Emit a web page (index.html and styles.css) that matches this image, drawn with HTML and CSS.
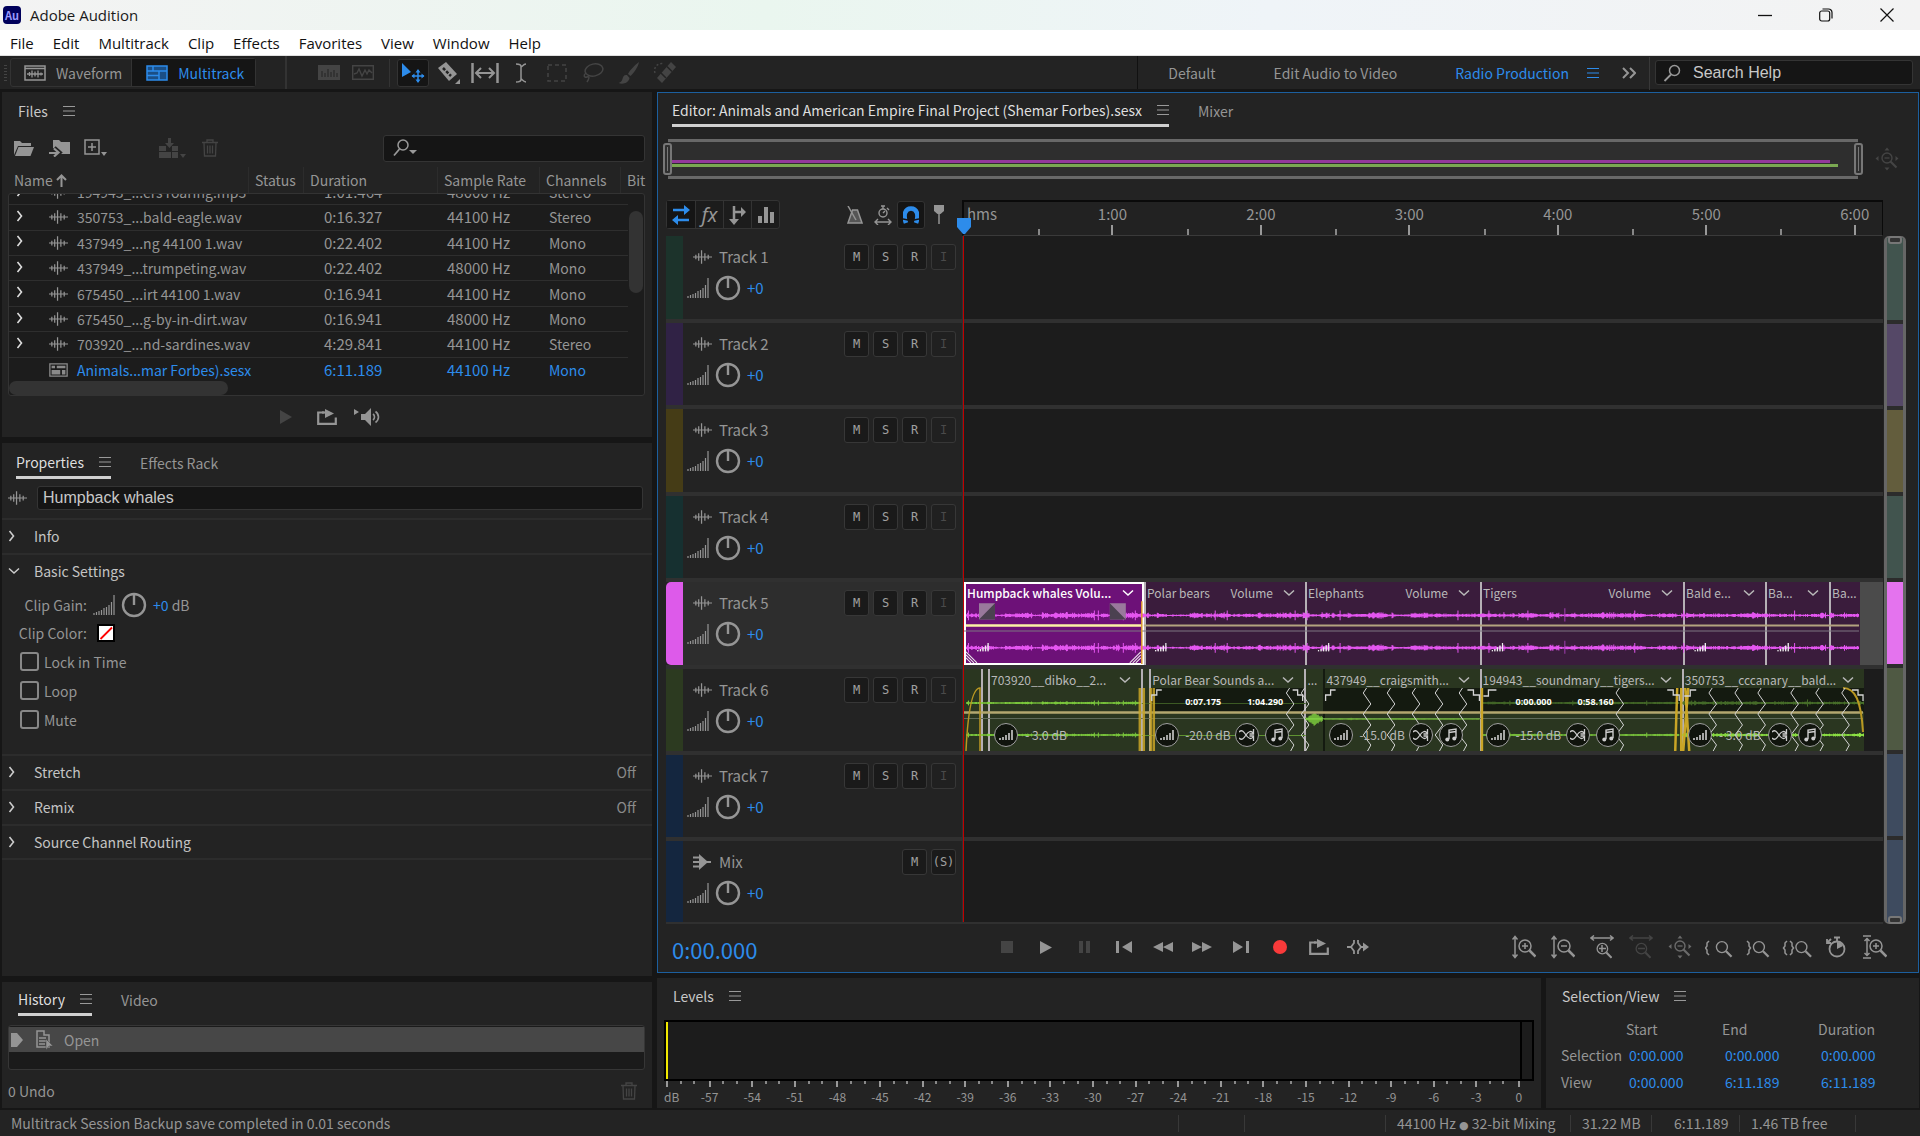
FILE: index.html
```html
<!DOCTYPE html>
<html lang="en">
<head>
<meta charset="utf-8">
<title>Adobe Audition</title>
<link rel="stylesheet" href="styles.css">
</head>
<body>
<svg class="defs" aria-hidden="true">
  <symbol id="wave" viewBox="0 0 20 16"><path d="M0 8H20M3 5.500v5M6 4v8M9 1v14M12.500 4v8M16 5.500v5" fill="none" stroke="currentColor" stroke-width="1.300"/></symbol>
  <symbol id="vol" viewBox="0 0 22 20"><path d="M1 20v-2M3.500 20v-3M6 20v-4M8.500 20v-5M11 20v-7M13.500 20v-8M16 20v-10M18.500 20v-13M21 20V0" stroke="currentColor" stroke-width="1.200"/></symbol>
  <symbol id="knob" viewBox="0 0 26 26"><circle cx="13" cy="13" r="11" fill="none" stroke="currentColor" stroke-width="2.400"/><path d="M13 3v10" stroke="currentColor" stroke-width="2.400"/></symbol>
  <symbol id="menu" viewBox="0 0 12 12"><path d="M0 1.500h12M0 6h12M0 10.500h12" stroke="currentColor" stroke-width="1.200"/></symbol>
  <symbol id="right" viewBox="0 0 8 12"><path d="M1.500 1l4 5-4 5" fill="none" stroke="currentColor" stroke-width="1.600"/></symbol>
  <symbol id="down" viewBox="0 0 12 8"><path d="M1 1.500l5 4.500 5-4.500" fill="none" stroke="currentColor" stroke-width="1.500"/></symbol>
  <symbol id="trash" viewBox="0 0 16 18"><path d="M0 3.500h16M5 3V1h6v2M2 4l.5 13h11L14 4M5.500 6.500v8M8 6.500v8M10.500 6.500v8" fill="none" stroke="currentColor" stroke-width="1.300"/></symbol>
  <symbol id="glass" viewBox="0 0 18 18"><circle cx="11.500" cy="6.500" r="5" fill="none" stroke="currentColor" stroke-width="1.500"/><path d="M8 10.500L1.500 17" stroke="currentColor" stroke-width="1.800"/></symbol>
  <symbol id="session" viewBox="0 0 22 16"><path d="M1 1h20v14H1z" fill="none" stroke="currentColor" stroke-width="1.500"/><path d="M3 3h4v3H3zM9 3h10v3H9zM3 8h10v5H3zM15 8h4v5h-4z" fill="currentColor"/></symbol>
  <symbol id="levels" viewBox="0 0 14 10"><path d="M1 10V8M4 10V7M7 10V5M10 10V3M13 10V0" stroke="currentColor" stroke-width="1.600"/></symbol>
  <symbol id="mag" viewBox="0 0 24 24"><circle cx="13" cy="11" r="6" fill="none" stroke="currentColor" stroke-width="1.500"/><path d="M17.500 15.500l6 6" stroke="currentColor" stroke-width="2.500"/></symbol>
  <symbol id="loop" viewBox="0 0 20 16"><path d="M7 3.500H1.200v11.300h17.600V8.500" fill="none" stroke="currentColor" stroke-width="2.200"/><path d="M5 3.500h5" stroke="currentColor" stroke-width="2.200"/><path d="M8 0l9 4.500L8 9z" fill="currentColor"/></symbol>
  <symbol id="shuffle" viewBox="0 0 16 12"><path d="M0 3c3-3 5 0 7 3s5 5 7 2M0 9c3 3 5 0 7-3s5-5 7-2M14.500 0v5h-4M14.500 12V7h-4" fill="none" stroke="currentColor" stroke-width="1.300"/></symbol>
  <symbol id="note" viewBox="0 0 14 14"><path d="M5 11V2l7-1v9M5 4.500l7-1" fill="none" stroke="currentColor" stroke-width="1.400"/><circle cx="3.300" cy="11.500" r="2" fill="currentColor"/><circle cx="10.300" cy="10.500" r="2" fill="currentColor"/></symbol>
  <symbol id="zig" viewBox="0 0 9 64"><path d="M4 0L.7 5l7.600 11L.7 26l7.600 11L.7 47l7.600 10L5 63" fill="none" stroke="#d5d5d5" stroke-width="1"/></symbol>
  <symbol id="zoomall" viewBox="0 0 24 24"><circle cx="12" cy="11" r="5" fill="none" stroke="currentColor" stroke-width="1.400"/><path d="M15.500 14.500l6 6" stroke="currentColor" stroke-width="2.200"/><path d="M9.500 11h5" stroke="currentColor" stroke-width="1.300"/><path d="M9.500 3.500L12 .5l2.500 3zM9.500 20.500l2.500 3 2.500-3zM3.500 9L.5 11.500l3 2.500zM20.500 9l3 2.500-3 2.500z" fill="currentColor"/></symbol>
</svg>

<header class="titlebar">
  <span class="logo">Au</span><span class="apptitle">Adobe Audition</span>
  <div class="winbtns">
    <button aria-label="Minimize"><svg width="14" height="14"><path d="M0 7.500h14" stroke="#111" stroke-width="1.300"/></svg></button>
    <button aria-label="Restore"><svg width="14" height="14"><rect x=".7" y="3" width="10" height="10" rx="2" fill="none" stroke="#111" stroke-width="1.200"/><path d="M3.500 1h6a3.500 3.500 0 0 1 3.500 3.500v6" fill="none" stroke="#111" stroke-width="1.200"/></svg></button>
    <button aria-label="Close"><svg width="14" height="14"><path d="M.5.500l13 13M13.500.500l-13 13" stroke="#111" stroke-width="1.200"/></svg></button>
  </div>
</header>
<nav class="menubar">
  <button>File</button><button>Edit</button><button>Multitrack</button><button>Clip</button><button>Effects</button><button>Favorites</button><button>View</button><button>Window</button><button>Help</button>
</nav>

<div class="toolbar">
  <span class="grip"></span>
  <div class="modes">
    <button class="mode"><svg width="22" height="16"><path d="M1 1h20v14H1z" fill="none" stroke="currentColor" stroke-width="1.500"/><path d="M1 3.500h20M3 9h16M5.500 7v4M8 5.500v7M11 6.500v5M14 5.500v7M17 7.500v3" fill="none" stroke="currentColor" stroke-width="1.300"/></svg>Waveform</button>
    <button class="mode on"><svg width="22" height="16"><path d="M1 1h20v14H1z" fill="#1b4f86" stroke="currentColor" stroke-width="1.500"/><path d="M1 6h20M7 1v5M1 10.500h12M13 6v9" stroke="currentColor" stroke-width="1.500"/></svg>Multitrack</button>
  </div>
  <div class="displays">
    <button class="ic dim" aria-label="Spectral frequency"><svg width="22" height="15"><path d="M0 0h22v15H0z" fill="currentColor"/><path d="M4 12V6M7 12V8M10 12V4M13 12V7M16 12V5M19 12V8" stroke="#232323"/></svg></button>
    <button class="ic dim" aria-label="Spectral pitch"><svg width="22" height="15"><path d="M.7.700h20.600v13.600H.7zM2 9l3-1 2-4 3 7 3-6 2 4 2-4 3 3" fill="none" stroke="currentColor" stroke-width="1.400"/></svg></button>
  </div>
  <div class="tools">
    <button class="ic sel" aria-label="Move tool"><svg width="24" height="22"><path d="M1 1v14l9-5z" fill="#2d8ceb"/><path d="M17 8v12M11 14h12" stroke="#2d8ceb" stroke-width="1.500"/><path d="M14.500 10.500L17 7l2.500 3.500zM14.500 17.500L17 21l2.500-3.500zM13.500 11.500L10.500 14l3 2.500zM20.500 11.500l3 2.500-3 2.500z" fill="#2d8ceb"/></svg></button>
    <button class="ic" aria-label="Razor tool"><svg width="26" height="24"><path d="M2 7l8-6 11 12-8 7z" fill="currentColor"/><path d="M7 7l8 8" stroke="#232323" stroke-width="2.500" stroke-dasharray="3 1.500"/><path d="M24 18v5h-5z" fill="currentColor"/></svg></button>
    <button class="ic" aria-label="Slip tool"><svg width="28" height="20"><path d="M1.500 0v20M26.500 0v20" stroke="currentColor" stroke-width="2.500"/><path d="M5 10h18M10 5l-5 5 5 5M18 5l5 5-5 5" fill="none" stroke="currentColor" stroke-width="2"/></svg></button>
    <button class="ic" aria-label="Time selection tool"><svg width="12" height="20"><path d="M1 1c3 0 5 .5 5 2.500S8 1 11 1M1 19c3 0 5-.5 5-2.500s2 2.500 5 2.500M6 3.500v13" fill="none" stroke="currentColor" stroke-width="1.500"/></svg></button>
    <button class="ic dim" aria-label="Marquee tool"><svg width="20" height="18"><path d="M1 1h18v16H1z" fill="none" stroke="currentColor" stroke-width="1.500" stroke-dasharray="4 3"/></svg></button>
    <button class="ic dim" aria-label="Lasso tool"><svg width="22" height="20"><ellipse cx="12" cy="7" rx="9" ry="6" fill="none" stroke="currentColor" stroke-width="1.500" transform="rotate(-12 12 7)"/><path d="M4 10c-3 2-2 5 1 4s2 2 0 5" fill="none" stroke="currentColor" stroke-width="1.500"/></svg></button>
    <button class="ic dim" aria-label="Brush tool"><svg width="22" height="22"><path d="M21 0c-4 3-9 8-11 12l2.500 2C16 11 20 5 21 0zM9 13c-3-.5-4 1.500-4.500 4S2 20.500.5 21c4 1.500 10 .5 11-5z" fill="currentColor"/></svg></button>
    <button class="ic dim" aria-label="Spot healing tool"><svg width="24" height="22"><path d="M18 0l5 5-14 16-5-5z" fill="currentColor"/><path d="M14 4.500l5 5M8 11l5 5" stroke="#232323" stroke-width="1.500"/><path d="M2 11a7 7 0 0 1 9-9" fill="none" stroke="currentColor" stroke-width="1.500" stroke-dasharray="2 2"/></svg></button>
  </div>
  <div class="workspaces">
    <button>Default</button><button>Edit Audio to Video</button><button class="blue">Radio Production <svg width="12" height="12"><use href="#menu"/></svg></button>
    <button aria-label="More workspaces"><svg width="14" height="12"><path d="M1 1l5 5-5 5M8 1l5 5-5 5" fill="none" stroke="currentColor" stroke-width="2"/></svg></button>
  </div>
  <label class="help field"><svg width="18" height="18"><use href="#glass"/></svg><input type="text" value="Search Help" aria-label="Search Help"></label>
</div>

<main class="main">
  <div class="left">
    <section class="panel files">
      <div class="tabs"><h2 class="tab">Files <svg width="12" height="12"><use href="#menu"/></svg></h2></div>
      <div class="filetools">
        <button class="ic" aria-label="Open file"><svg width="20" height="16"><path d="M0 15V1h6l2 2h9v3H4z" fill="currentColor"/><path d="M4.500 7H20l-3.500 9H1z" fill="currentColor"/></svg></button>
        <button class="ic" aria-label="Import file"><svg width="22" height="18"><path d="M4 9V1h6l2 2h9v12H10z" fill="currentColor"/><path d="M0 14h8M5 9l5 4.500L5 18" fill="none" stroke="#232323" stroke-width="5"/><path d="M0 14h8M5 9.500l4.500 4L5 17.500" fill="none" stroke="currentColor" stroke-width="2.200"/></svg></button>
        <button class="ic" aria-label="New file"><svg width="24" height="18"><path d="M1 1h14v14H1zM8 4v8M4 8h8" fill="none" stroke="currentColor" stroke-width="1.500"/><path d="M17 13h6l-3 4z" fill="currentColor"/></svg></button>
        <button class="ic dim gap" aria-label="Insert into multitrack"><svg width="27" height="20"><path d="M0 8h7v5H0zM13 8h6v5h-6zM0 14h12v6H0zM13 14h6v6h-6zM9 0h3v5h3l-4.500 5L6 5h3z" fill="currentColor"/><path d="M21 16h6l-3 4z" fill="currentColor"/></svg></button>
        <button class="ic dim" aria-label="Delete"><svg width="16" height="18"><use href="#trash"/></svg></button>
        <label class="field filesearch"><svg width="24" height="18"><circle cx="10" cy="6" r="5" fill="none" stroke="currentColor" stroke-width="1.500"/><path d="M6.500 10L1 16.500" stroke="currentColor" stroke-width="1.800"/><path d="M16 11h8l-4 4z" fill="currentColor"/></svg><input type="text" aria-label="Search files"></label>
      </div>
      <div class="colheads"><span>Name<svg width="11" height="13"><path d="M5.500 13V2M1 6l4.500-4.500L10 6" fill="none" stroke="currentColor" stroke-width="2"/></svg></span><span>Status</span><span>Duration</span><span>Sample Rate</span><span>Channels</span><span>Bit</span></div>
      <div class="filebox">
        <table class="filetable">
          <colgroup><col class="c1"><col class="c2"><col class="c3"><col class="c4"><col class="c5"><col></colgroup>
          <tbody>
          <tr><td><svg width="8" height="12"><use href="#right"/></svg></td><td><svg width="19" height="16"><use href="#wave"/></svg></td><td>194943_...ers roaring.mp3</td><td class="num">1:01.464</td><td class="num">48000 Hz</td><td>Stereo</td></tr>
          <tr><td><svg width="8" height="12"><use href="#right"/></svg></td><td><svg width="19" height="16"><use href="#wave"/></svg></td><td>350753_...bald-eagle.wav</td><td class="num">0:16.327</td><td class="num">44100 Hz</td><td>Stereo</td></tr>
          <tr><td><svg width="8" height="12"><use href="#right"/></svg></td><td><svg width="19" height="16"><use href="#wave"/></svg></td><td>437949_...ng 44100 1.wav</td><td class="num">0:22.402</td><td class="num">44100 Hz</td><td>Mono</td></tr>
          <tr><td><svg width="8" height="12"><use href="#right"/></svg></td><td><svg width="19" height="16"><use href="#wave"/></svg></td><td>437949_...trumpeting.wav</td><td class="num">0:22.402</td><td class="num">48000 Hz</td><td>Mono</td></tr>
          <tr><td><svg width="8" height="12"><use href="#right"/></svg></td><td><svg width="19" height="16"><use href="#wave"/></svg></td><td>675450_...irt 44100 1.wav</td><td class="num">0:16.941</td><td class="num">44100 Hz</td><td>Mono</td></tr>
          <tr><td><svg width="8" height="12"><use href="#right"/></svg></td><td><svg width="19" height="16"><use href="#wave"/></svg></td><td>675450_...g-by-in-dirt.wav</td><td class="num">0:16.941</td><td class="num">48000 Hz</td><td>Mono</td></tr>
          <tr><td><svg width="8" height="12"><use href="#right"/></svg></td><td><svg width="19" height="16"><use href="#wave"/></svg></td><td>703920_...nd-sardines.wav</td><td class="num">4:29.841</td><td class="num">44100 Hz</td><td>Stereo</td></tr>
          <tr class="blue"><td></td><td><svg class="grey" width="19" height="14" viewBox="0 0 22 16" preserveAspectRatio="none"><use href="#session" width="22" height="16"/></svg></td><td>Animals...mar Forbes).sesx</td><td class="num">6:11.189</td><td class="num">44100 Hz</td><td>Mono</td></tr>
          </tbody>
        </table>
        <div class="vthumb"></div>
        <div class="hthumb"></div>
      </div>
      <div class="preview">
        <button class="ic dim" aria-label="Play"><svg width="12" height="14"><path d="M0 0l12 7-12 7z" fill="currentColor"/></svg></button>
        <button class="ic" aria-label="Loop playback"><svg width="20" height="16"><use href="#loop"/></svg></button>
        <button class="ic" aria-label="Auto-play"><svg width="28" height="18"><path d="M0 1l5 3-5 3zM7 6h4l6-6v18l-6-6H7z" fill="currentColor"/><path d="M19 6c2 1.500 2 4.500 0 6M21.500 3.500c4 3 4 8 0 11" fill="none" stroke="currentColor" stroke-width="1.600"/></svg></button>
      </div>
    </section>

    <section class="panel props">
      <div class="tabs"><h2 class="tab active">Properties <svg width="12" height="12"><use href="#menu"/></svg></h2><button class="tab off">Effects Rack</button></div>
      <div class="cliprow"><svg width="19" height="16"><use href="#wave"/></svg><input class="field clipname" type="text" value="Humpback whales" aria-label="Clip name"></div>
      <div class="sec"><button class="sechead"><svg width="8" height="12"><use href="#right"/></svg>Info</button></div>
      <div class="sec open"><button class="sechead"><svg width="12" height="8"><use href="#down"/></svg>Basic Settings</button>
        <div class="gain"><span class="lab">Clip Gain:</span><svg width="22" height="22"><use href="#vol"/></svg><svg width="26" height="26"><use href="#knob"/></svg><span><span class="blue">+0</span> dB</span></div>
        <div class="gain color"><span class="lab">Clip Color:</span><button class="swatch" aria-label="Clip color"><svg width="14" height="14"><path d="M1.500 13L13 1.500" stroke="#f00" stroke-width="1.800"/></svg></button></div>
        <label class="check"><input type="checkbox">Lock in Time</label>
        <label class="check"><input type="checkbox">Loop</label>
        <label class="check"><input type="checkbox">Mute</label>
      </div>
      <div class="sec"><button class="sechead"><svg width="8" height="12"><use href="#right"/></svg>Stretch<span>Off</span></button></div>
      <div class="sec"><button class="sechead"><svg width="8" height="12"><use href="#right"/></svg>Remix<span>Off</span></button></div>
      <div class="sec last"><button class="sechead"><svg width="8" height="12"><use href="#right"/></svg>Source Channel Routing</button></div>
    </section>

    <section class="panel history">
      <div class="tabs"><h2 class="tab active">History <svg width="12" height="12"><use href="#menu"/></svg></h2><button class="tab off">Video</button></div>
      <div class="histbox"><div class="histrow"><svg width="12" height="14"><path d="M0 0h6l6 7-6 7H0z" fill="currentColor"/></svg><svg width="18" height="20"><path d="M1 1h7v4h5v12H1zM3 8h7M3 11h7M3 14h6" fill="none" stroke="currentColor" stroke-width="1.500"/><path d="M10 9l7 7h-4l-3 4z" fill="currentColor" stroke="#474747" stroke-width=".5"/></svg>Open</div></div>
      <div class="undo">0 Undo<button class="ic dim" aria-label="Delete history"><svg width="16" height="18"><use href="#trash"/></svg></button></div>
    </section>
  </div>

  <div class="rightcol">
    <section class="panel editor">
      <div class="tabs"><h2 class="tab active">Editor: Animals and American Empire Final Project (Shemar Forbes).sesx <svg width="12" height="12"><use href="#menu"/></svg></h2><button class="tab off">Mixer</button></div>
      <div class="overview">
        <div class="navigator"><i class="handle"></i><div class="navtracks"><i class="np"></i><i class="ng"></i></div><i class="handle"></i></div>
        <button class="ic dim" aria-label="Zoom out full"><svg width="24" height="24"><use href="#zoomall"/></svg></button>
      </div>
      <div class="timehead">
        <div class="edtools">
          <div class="toggles">
            <button class="blue" aria-label="Inputs and outputs"><svg width="20" height="20"><path d="M2 5h11M18 15H7" stroke="currentColor" stroke-width="2.500"/><path d="M13 0l6 5-6 5zM7 10l-6 5 6 5z" fill="currentColor"/></svg></button>
            <button aria-label="Effects" class="fx">fx</button>
            <button aria-label="Sends"><svg width="18" height="20"><path d="M5 1v15M5 7h10" stroke="currentColor" stroke-width="2.500"/><path d="M0 14h10l-5 6zM12 2l5 5-5 5z" fill="currentColor"/></svg></button>
            <button aria-label="EQ"><svg width="16" height="16"><path d="M2 16V9M8 16V0M14 16V5" stroke="currentColor" stroke-width="4"/></svg></button>
          </div>
          <div class="snaps">
            <button class="ic" aria-label="Metronome"><svg width="16" height="18"><path d="M1 17L5.500 4h5L15 17z" fill="#555" stroke="currentColor" stroke-width="1.500"/><path d="M1 0l8 14" stroke="currentColor" stroke-width="1.500"/></svg></button>
            <button class="ic" aria-label="Stretch"><svg width="18" height="20"><circle cx="9" cy="8" r="4" fill="none" stroke="currentColor" stroke-width="1.400"/><path d="M9 8l2-2M9 4V1M7 1h4M1 17h16M4 14l-3 3 3 3M14 14l3 3-3 3M13 3l2 2" fill="none" stroke="currentColor" stroke-width="1.400"/></svg></button>
            <button class="ic sel blue" aria-label="Snap"><svg width="16" height="18"><path d="M3 17C0 9 2 2.500 8 2.500S16 9 13 17" fill="none" stroke="currentColor" stroke-width="4.500"/><path d="M0 13l5 1M16 13l-5 1" stroke="#151515" stroke-width="1.300"/></svg></button>
            <button class="ic" aria-label="Add marker"><svg width="10" height="20"><path d="M0 0h10v6L6.500 9h-3L0 6z" fill="currentColor"/><path d="M5 5v14" stroke="currentColor" stroke-width="1.500"/></svg></button>
          </div>
        </div>
        <div class="ruler"><span class="half">hms</span><span>1:00</span><span>2:00</span><span>3:00</span><span>4:00</span><span>5:00</span><span>6:00</span></div>
      </div>
      <div class="trackarea">
        <div class="tracks">
          <svg class="playhead" width="14" height="16"><path d="M0 0h14v9l-6 7H6L0 9z" fill="#2d8ceb"/></svg>
          <div class="track t1"><div class="thead"><svg width="19" height="16"><use href="#wave"/></svg><b>Track 1</b><span class="msr"><button>M</button><button>S</button><button>R</button><button class="dimi">I</button></span><div class="vol"><svg width="22" height="20"><use href="#vol"/></svg><svg width="26" height="26"><use href="#knob"/></svg><span class="blue">+0</span></div></div><div class="lane"></div></div>
          <div class="track t2"><div class="thead"><svg width="19" height="16"><use href="#wave"/></svg><b>Track 2</b><span class="msr"><button>M</button><button>S</button><button>R</button><button class="dimi">I</button></span><div class="vol"><svg width="22" height="20"><use href="#vol"/></svg><svg width="26" height="26"><use href="#knob"/></svg><span class="blue">+0</span></div></div><div class="lane"></div></div>
          <div class="track t3"><div class="thead"><svg width="19" height="16"><use href="#wave"/></svg><b>Track 3</b><span class="msr"><button>M</button><button>S</button><button>R</button><button class="dimi">I</button></span><div class="vol"><svg width="22" height="20"><use href="#vol"/></svg><svg width="26" height="26"><use href="#knob"/></svg><span class="blue">+0</span></div></div><div class="lane"></div></div>
          <div class="track t4"><div class="thead"><svg width="19" height="16"><use href="#wave"/></svg><b>Track 4</b><span class="msr"><button>M</button><button>S</button><button>R</button><button class="dimi">I</button></span><div class="vol"><svg width="22" height="20"><use href="#vol"/></svg><svg width="26" height="26"><use href="#knob"/></svg><span class="blue">+0</span></div></div><div class="lane"></div></div>
          <div class="track t5"><div class="thead"><svg width="19" height="16"><use href="#wave"/></svg><b>Track 5</b><span class="msr"><button>M</button><button>S</button><button>R</button><button class="dimi">I</button></span><div class="vol"><svg width="22" height="20"><use href="#vol"/></svg><svg width="26" height="26"><use href="#knob"/></svg><span class="blue">+0</span></div></div>
            <div class="lane">
              <div class="clip selected" style="flex-grow:180"><div class="cliptop"><span>Humpback whales Volu...</span><svg width="12" height="8"><use href="#down"/></svg></div></div>
              <div class="clip" style="flex-grow:161"><div class="cliptop"><span>Polar bears</span><span class="env">Volume</span><svg width="12" height="8"><use href="#down"/></svg></div></div>
              <div class="clip" style="flex-grow:175"><div class="cliptop"><span>Elephants</span><span class="env">Volume</span><svg width="12" height="8"><use href="#down"/></svg></div></div>
              <div class="clip" style="flex-grow:203"><div class="cliptop"><span>Tigers</span><span class="env">Volume</span><svg width="12" height="8"><use href="#down"/></svg></div></div>
              <div class="clip" style="flex-grow:82"><div class="cliptop"><span>Bald e...</span><svg width="12" height="8"><use href="#down"/></svg></div></div>
              <div class="clip" style="flex-grow:64"><div class="cliptop"><span>Ba...</span><svg width="12" height="8"><use href="#down"/></svg></div></div>
              <div class="clip" style="flex-grow:31"><div class="cliptop"><span>Ba...</span></div></div>
              <div class="rest" style="flex-grow:23"></div>
              <svg class="overlay" viewBox="0 0 920 82" preserveAspectRatio="none">
                <path d="M0 48.500H896" stroke="#7d7480"/>
                <path class="w" data-y="33" data-from="2" data-to="896" data-amp="4" stroke="#e455f0"/>
                <path class="w" data-y="65" data-from="2" data-to="896" data-amp="4" stroke="#e455f0"/>
                <path d="M601.500 26v13M601.500 58v13" stroke="#a03eb0"/>
                <path d="M180 43H896" stroke="#b3a27f" stroke-width="2"/>
                <path d="M2 43H178" stroke="#fbf3a4" stroke-width="2.500"/>
                <path d="M178 19v62" stroke="#e09a2c" stroke-width="1.500"/>
                <path d="M15 21h16v16H15zM146 21h16v16h-16z" fill="#99799c"/>
                <path d="M31 21v16H15zM146 21v16h16z" fill="#4b4150"/>
                <path d="M2 72l8 8M2 75l5 5M2 69l11 11M177 72l-8 8M177 75l-5 5M177 69l-11 11" stroke="#eee" stroke-width="1"/>
                <g color="#eee"><use href="#levels" x="13" y="60" width="12" height="9"/><use href="#levels" x="191" y="60" width="12" height="9"/><use href="#levels" x="354" y="60" width="12" height="9"/><use href="#levels" x="528" y="60" width="12" height="9"/><use href="#levels" x="731" y="60" width="12" height="9"/><use href="#levels" x="814" y="60" width="12" height="9"/></g>
              </svg>
            </div></div>
          <div class="track t6"><div class="thead"><svg width="19" height="16"><use href="#wave"/></svg><b>Track 6</b><span class="msr"><button>M</button><button>S</button><button>R</button><button class="dimi">I</button></span><div class="vol"><svg width="22" height="20"><use href="#vol"/></svg><svg width="26" height="26"><use href="#knob"/></svg><span class="blue">+0</span></div></div>
            <div class="lane">
              <div class="clip" style="flex-grow:17"></div>
              <div class="clip" style="flex-grow:7"></div>
              <div class="clip" style="flex-grow:153"><div class="cliptop"><span>703920__dibko__2...</span><svg width="12" height="8"><use href="#down"/></svg></div><div class="clipfx"><i class="badge"><svg width="14" height="10"><use href="#levels"/></svg></i><span>- 3.0 dB</span></div></div>
              <div class="clip" style="flex-grow:8"></div>
              <div class="clip stretched" style="flex-grow:155"><div class="cliptop"><span>Polar Bear Sounds a...</span><svg width="12" height="8"><use href="#down"/></svg></div><div class="times"><span>0:07.175</span><span>1:04.290</span></div><div class="clipfx"><i class="badge"><svg width="14" height="10"><use href="#levels"/></svg></i><span>-20.0 dB</span><i class="badge"><svg width="16" height="12"><use href="#shuffle"/></svg></i><i class="badge"><svg width="14" height="14"><use href="#note"/></svg></i></div></div>
              <div class="clip" style="flex-grow:19"><div class="cliptop"><span>...</span></div></div>
              <div class="clip stretched dark" style="flex-grow:156"><div class="cliptop"><span>437949__craigsmith...</span><svg width="12" height="8"><use href="#down"/></svg></div><div class="clipfx"><i class="badge"><svg width="14" height="10"><use href="#levels"/></svg></i><span>-15.0 dB</span><i class="badge"><svg width="16" height="12"><use href="#shuffle"/></svg></i><i class="badge"><svg width="14" height="14"><use href="#note"/></svg></i></div></div>
              <div class="clip stretched" style="flex-grow:202"><div class="cliptop"><span>194943__soundmary__tigers...</span><svg width="12" height="8"><use href="#down"/></svg></div><div class="times"><span>0:00.000</span><span>0:58.160</span></div><div class="clipfx"><i class="badge"><svg width="14" height="10"><use href="#levels"/></svg></i><span>-15.0 dB</span><i class="badge"><svg width="16" height="12"><use href="#shuffle"/></svg></i><i class="badge"><svg width="14" height="14"><use href="#note"/></svg></i></div></div>
              <div class="clip stretched" style="flex-grow:182"><div class="cliptop"><span>350753__cccanary__bald...</span><svg width="12" height="8"><use href="#down"/></svg></div><div class="clipfx"><i class="badge"><svg width="14" height="10"><use href="#levels"/></svg></i><span>- 3.0 dB</span><i class="badge"><svg width="16" height="12"><use href="#shuffle"/></svg></i><i class="badge"><svg width="14" height="14"><use href="#note"/></svg></i></div></div>
              <div class="none" style="flex-grow:19"></div>
              <svg class="overlay" viewBox="0 0 920 82" preserveAspectRatio="none">
                <path d="M0 49.500H900" stroke="#5f6a5a"/>
                <path class="w" data-y="34" data-from="2" data-to="177" data-amp="2" stroke="#7fce3e"/>
                <path class="w" data-y="66" data-from="2" data-to="177" data-amp="2" stroke="#7fce3e"/>
                <path d="M178 34.500H342" stroke="#3c5a24"/><path d="M178 66.500H342" stroke="#5f9432"/>
                <path class="w" data-y="50" data-from="342" data-to="359" data-amp="5" data-dense="1" stroke="#86dc40"/>
                <path class="w" data-y="50" data-from="360" data-to="516" data-amp="1" stroke="#6fb437"/>
                <path class="w" data-y="34" data-from="518" data-to="716" data-amp="2" stroke="#48702a"/>
                <path class="w" data-y="66" data-from="518" data-to="716" data-amp="2" stroke="#7fce3e"/>
                <path class="w" data-y="34" data-from="718" data-to="901" data-amp="3" stroke="#48702a"/>
                <path class="w" data-y="66" data-from="718" data-to="901" data-amp="3" stroke="#8ee344"/>
                <path d="M0 43.500H900" stroke="#b3a76f" stroke-width="2.500"/>
                <path d="M2 82C4 40 9 19 16 19v63" fill="none" stroke="#b99722" stroke-width="1.500"/>
                <path d="M176 19v63M180 19v63M187 19v63M190 19v63" stroke="#c9a526" stroke-width="2.500" opacity=".85"/>
                <path d="M518.500 19v63M712 82l2-63M718 19v63M722 19l4 63M720 82l5-63" fill="none" stroke="#c9a526" stroke-width="2.500"/>
                <path d="M880 19c12 0 18 12 20 44" fill="none" stroke="#b99722" stroke-width="2"/>
                <path d="M188 32v-6h5v-5h5M339 32v-6h-5v-5h-5M362 32v-6h5v-5h5M516 32v-6h-6v-5h-6M520 27h5v-6h8M716 32v-6h-6v-5h-6M721 27h6v-6h6M900 32v-6h-5v-5h-6" fill="none" stroke="#d5d5d5" stroke-width="1.300"/>
                <g><use href="#zig" x="322" y="19" width="9" height="64"/><use href="#zig" x="337" y="19" width="9" height="64"/><use href="#zig" x="399" y="19" width="9" height="64"/><use href="#zig" x="423" y="19" width="9" height="64"/><use href="#zig" x="448" y="19" width="9" height="64"/><use href="#zig" x="471" y="19" width="9" height="64"/><use href="#zig" x="495" y="19" width="9" height="64"/><use href="#zig" x="652" y="19" width="9" height="64"/><use href="#zig" x="745" y="19" width="9" height="64"/><use href="#zig" x="771" y="19" width="9" height="64"/><use href="#zig" x="794" y="19" width="9" height="64"/><use href="#zig" x="827" y="19" width="9" height="64"/><use href="#zig" x="852" y="19" width="9" height="64"/><use href="#zig" x="878" y="19" width="9" height="64"/></g>
              </svg>
            </div></div>
          <div class="track t7"><div class="thead"><svg width="19" height="16"><use href="#wave"/></svg><b>Track 7</b><span class="msr"><button>M</button><button>S</button><button>R</button><button class="dimi">I</button></span><div class="vol"><svg width="22" height="20"><use href="#vol"/></svg><svg width="26" height="26"><use href="#knob"/></svg><span class="blue">+0</span></div></div><div class="lane"></div></div>
          <div class="track mix"><div class="thead"><svg width="19" height="16"><path d="M0 3.500h7M0 8h7M0 12.500h7M12 8h6" stroke="currentColor" stroke-width="2"/><path d="M6 0l9 8-9 8z" fill="currentColor"/></svg><b>Mix</b><span class="msr"><button>M</button><button>(S)</button></span><div class="vol"><svg width="22" height="20"><use href="#vol"/></svg><svg width="26" height="26"><use href="#knob"/></svg><span class="blue">+0</span></div></div><div class="lane"></div></div>
        </div>
        <div class="vnav"><i class="grab"></i><i class="s1"></i><i class="s2"></i><i class="s3"></i><i class="s1"></i><i class="s5"></i><i class="s6"></i><i class="s7"></i><i class="s7"></i><i class="grab"></i></div>
      </div>
      <div class="transport">
        <span class="clock">0:00.000</span>
        <div class="tbtns play">
          <button class="ic dim" aria-label="Stop"><svg width="12" height="12"><path d="M0 0h12v12H0z" fill="currentColor"/></svg></button>
          <button class="ic" aria-label="Play"><svg width="12" height="13"><path d="M0 0l12 6.500L0 13z" fill="currentColor"/></svg></button>
          <button class="ic dim" aria-label="Pause"><svg width="12" height="12"><path d="M0 0h4v12H0zM7 0h4v12H7z" fill="currentColor"/></svg></button>
          <button class="ic" aria-label="Previous"><svg width="16" height="12"><path d="M0 0h3v12H0zM16 0v12L6 6z" fill="currentColor"/></svg></button>
          <button class="ic" aria-label="Rewind"><svg width="20" height="10"><path d="M10 0v10L0 5zM20 0v10L10 5z" fill="currentColor"/></svg></button>
          <button class="ic" aria-label="Fast forward"><svg width="20" height="10"><path d="M0 0v10l10-5zM10 0v10l10-5z" fill="currentColor"/></svg></button>
          <button class="ic" aria-label="Next"><svg width="16" height="12"><path d="M13 0h3v12h-3zM0 0v12l10-6z" fill="currentColor"/></svg></button>
          <button class="ic rec" aria-label="Record"><svg width="14" height="14"><circle cx="7" cy="7" r="7" fill="currentColor"/></svg></button>
          <button class="ic" aria-label="Loop playback"><svg width="20" height="16"><use href="#loop"/></svg></button>
          <button class="ic" aria-label="Skip selection"><svg width="22" height="16"><path d="M0 8h5M7 1v3L4 8l3 4v3M11 1v3l3 4-3 4v3M14 8h4" fill="none" stroke="currentColor" stroke-width="1.800"/><path d="M16 3.500L22 8l-6 4.500z" fill="currentColor"/></svg></button>
        </div>
        <div class="tbtns zooms">
          <button class="ic" aria-label="Zoom in amplitude"><svg width="24" height="24"><use href="#mag"/><path d="M13 8v6M10 11h6M3 2v20M.500 4.500L3 1.500l2.500 3M.500 19.500l2.500 3 2.500-3" fill="none" stroke="currentColor" stroke-width="1.500"/></svg></button>
          <button class="ic" aria-label="Zoom out amplitude"><svg width="24" height="24"><use href="#mag"/><path d="M10 11h6M3 2v20M.500 4.500L3 1.500l2.500 3M.500 19.500l2.500 3 2.500-3" fill="none" stroke="currentColor" stroke-width="1.500"/></svg></button>
          <button class="ic" aria-label="Zoom in time"><svg width="24" height="24"><use href="#mag" y="4" x="1" width="21" height="21"/><path d="M12 10v7M9 13.500h7M1 3h22M4 .500L1 3l3 2.500M20 .500L23 3l-3 2.500" fill="none" stroke="currentColor" stroke-width="1.500"/></svg></button>
          <button class="ic dim" aria-label="Zoom out time"><svg width="24" height="24"><use href="#mag" y="4" x="1" width="21" height="21"/><path d="M9 13.500h7M1 3h22M4 .500L1 3l3 2.500M20 .500L23 3l-3 2.500" fill="none" stroke="currentColor" stroke-width="1.500"/></svg></button>
          <button class="ic mid" aria-label="Zoom out full"><svg width="24" height="24"><use href="#zoomall"/></svg></button>
          <button class="ic" aria-label="Zoom in at in point"><svg width="28" height="24"><use href="#mag" x="4" y="2" width="24" height="22"/><path d="M4 6L2 8v3l-1.500 2L2 15v3l2 2" fill="none" stroke="currentColor" stroke-width="1.500"/></svg></button>
          <button class="ic" aria-label="Zoom in at out point"><svg width="24" height="24"><use href="#mag" x="0" y="2" width="24" height="22"/><path d="M1 6l2 2v3l1.500 2L3 15v3l-2 2" fill="none" stroke="currentColor" stroke-width="1.500"/></svg></button>
          <button class="ic" aria-label="Zoom to selection"><svg width="30" height="24"><use href="#mag" x="7" y="2" width="23" height="22"/><path d="M5 6L3 8v3l-1.500 2L3 15v3l2 2M8 6l2 2v3l1.500 2-1.500 2v3l-2 2" fill="none" stroke="currentColor" stroke-width="1.500"/></svg></button>
          <button class="ic" aria-label="Zoom by time"><svg width="20" height="22"><circle cx="11" cy="13" r="7.500" fill="none" stroke="currentColor" stroke-width="1.800"/><path d="M11 13V6a7 7 0 0 1 6 4z" fill="currentColor"/><path d="M8 1.500h6M11 1v5M1 7l4-4M1 3v4h4" fill="none" stroke="currentColor" stroke-width="1.800"/></svg></button>
          <button class="ic" aria-label="Zoom to track"><svg width="24" height="24"><use href="#mag"/><path d="M13 8v6M10 11h6M4 3v18M0 1h8M0 23h8M1.500 6L4 3.500 6.500 6M1.500 18L4 20.500 6.500 18" fill="none" stroke="currentColor" stroke-width="1.500"/></svg></button>
        </div>
      </div>
    </section>
    <div class="bottom">
      <section class="panel levelspanel">
        <div class="tabs"><h2 class="tab">Levels <svg width="12" height="12"><use href="#menu"/></svg></h2></div>
        <div class="meter"><i></i></div>
        <div class="scale"><span><em class="first">dB</em></span><span><em>-57</em></span><span><em>-54</em></span><span><em>-51</em></span><span><em>-48</em></span><span><em>-45</em></span><span><em>-42</em></span><span><em>-39</em></span><span><em>-36</em></span><span><em>-33</em></span><span><em>-30</em></span><span><em>-27</em></span><span><em>-24</em></span><span><em>-21</em></span><span><em>-18</em></span><span><em>-15</em></span><span><em>-12</em></span><span><em>-9</em></span><span><em>-6</em></span><span><em>-3</em></span><span class="zero"><em>0</em></span></div>
      </section>
      <section class="panel selview">
        <div class="tabs"><h2 class="tab">Selection/View <svg width="12" height="12"><use href="#menu"/></svg></h2></div>
        <table>
          <thead><tr><th></th><th>Start</th><th>End</th><th>Duration</th></tr></thead>
          <tbody><tr><th>Selection</th><td>0:00.000</td><td>0:00.000</td><td>0:00.000</td></tr>
          <tr><th>View</th><td>0:00.000</td><td>6:11.189</td><td>6:11.189</td></tr></tbody>
        </table>
      </section>
    </div>
  </div>
</main>
<footer class="status"><span class="msg">Multitrack Session Backup save completed in 0.01 seconds</span><span class="s66"></span><span class="s141"></span><span class="s185">44100 Hz <b>●</b> 32-bit Mixing</span><span class="s81">31.22 MB</span><span class="s88">6:11.189</span><span class="s116">1.46 TB free</span><span class="s63"></span></footer>
<script src="waveforms.js"></script>
</body>
</html>
```
FILE: styles.css
```css
* { box-sizing: border-box; }
:root { --ui: "Noto Sans CJK SC", "Noto Sans", sans-serif; --blue: #2d8ceb; --line: #303030; --text: #959595; --bg: #232323; }
body { margin: 0; min-height: 100vh; display: flex; flex-direction: column; background: #161616; color: var(--text); font: 14px/20px var(--ui); }
button { font: inherit; color: inherit; background: none; border: 0; padding: 0; margin: 0; text-align: left; }
input { font: inherit; color: inherit; min-width: 0; }
svg { display: block; flex: none; }
h2 { margin: 0; font: inherit; }
.defs { position: absolute; width: 0; height: 0; }
.blue { color: var(--blue); }
.grey { color: #8a8a8a; }

.titlebar { height: 30px; display: flex; align-items: center; gap: 9px; padding: 0 3px; background: linear-gradient(90deg, #f3f3f3, #eaf6ef 40%, #eff4f8 66%, #f3f3f3); color: #1a1a1a; font: 15px/20px "Open Sans", sans-serif; }
.logo { width: 18px; height: 18px; border-radius: 4px; background: #00005b; color: #9999ff; font: bold 11px/18px var(--ui); text-align: center; }
.apptitle { flex: 1; }
.winbtns { display: flex; }
.winbtns button { width: 61px; height: 28px; display: grid; place-items: center; }
.menubar { height: 26px; display: flex; align-items: center; gap: 19px; padding-left: 10px; background: #fff; color: #111; font: 15px/20px "Open Sans", sans-serif; border-bottom: 1px solid #e0e0e0; }

.toolbar { height: 33px; display: flex; align-items: center; background: var(--bg); margin-bottom: 3px; }
.grip { width: 3px; height: 16px; margin: 0 3px 0 4px; background: repeating-linear-gradient(#444 0 1px, transparent 1px 3px); }
.modes { display: flex; border: 1px solid #333; border-radius: 3px; }
.mode { display: flex; align-items: center; gap: 10px; height: 27px; padding: 0 9px 0 13px; }
.mode.on { background: #151515; color: var(--blue); border-left: 1px solid #333; padding: 0 11px 0 14px; }
.displays { display: flex; gap: 2px; height: 33px; align-items: center; border-left: 2px solid #333; margin-left: 29px; padding: 0 10px 0 26px; }
.tools { display: flex; gap: 4px; align-items: center; border-left: 1px solid #333; padding-left: 7px; flex: 1; }
.ic { width: 32px; height: 28px; display: grid; place-items: center; flex: none; }
.ic.dim { color: #444; }
.ic.mid { color: #6a6a6a; }
.ic.sel { background: #151515; border: 1px solid #333; border-radius: 3px; }
.workspaces { display: flex; align-items: center; height: 33px; border-left: 1px solid #111; padding: 0 14px 0 30px; gap: 58px; }
.workspaces button { display: flex; align-items: center; gap: 18px; }
.workspaces button:last-child { margin-left: -35px; }
.field { background: #151515; border: 1px solid #343434; border-radius: 3px; color: #c8c8c8; }
.help { width: 258px; height: 25px; display: flex; align-items: center; gap: 12px; padding-left: 7px; margin: 0 7px 0 5px; position: relative; }
.help::before { content: ""; position: absolute; left: -7px; top: -4px; width: 1px; height: 33px; background: #383838; }
.help input, .clipname, .filesearch input { font: 16px/20px "Liberation Sans", sans-serif; }
.help input, .filesearch input { background: none; border: 0; outline: 0; flex: 1; padding: 0; }
.help svg, .filesearch svg { color: #999; }

.main { flex: 1; display: grid; grid-template-columns: 650px minmax(0, 1fr); gap: 5px; padding: 0 1px 0 2px; margin-bottom: 2px; }
.left, .rightcol { display: flex; flex-direction: column; gap: 6px; min-width: 0; }
.rightcol { gap: 5px; }
.panel { background: var(--bg); }
.tabs { display: flex; gap: 29px; align-items: flex-start; }
.tab { display: flex; align-items: center; gap: 15px; height: 25px; color: #c8c8c8; }
.tab svg { color: #999; }
.tab.active { border-bottom: 3px solid #d0d0d0; height: 29px; padding-bottom: 3px; color: #dedede; }
.tab.off { color: var(--text); }

.files { padding: 6px 7px 6px 6px; }
.files .tabs { padding-left: 10px; height: 37px; }
.filetools { display: flex; gap: 4px; align-items: center; height: 26px; }
.filetools .gap { margin-left: 40px; }
.filetools .ic:nth-child(5) { width: 36px; }
.filesearch { margin-left: auto; width: 262px; height: 27px; display: flex; align-items: center; padding-left: 9px; gap: 6px; }
.colheads { display: grid; grid-template-columns: 241px 55px 134px 102px 81px 1fr; margin-top: 6px; height: 26px; }
.colheads span { display: flex; align-items: center; gap: 3px; padding-left: 6px; border-right: 1px solid #2c2c2c; line-height: 26px; }
.colheads span:last-child { border: 0; }
.filebox { height: 203px; border: 1px solid #333; border-radius: 3px; background: #1c1c1c; overflow: hidden; position: relative; }
.filetable { margin-top: -14px; width: 619px; height: 202px; border-collapse: collapse; table-layout: fixed; }
.filetable td { padding: 0; border-bottom: 1px solid #2e2e2e; white-space: nowrap; line-height: 20px; }
.filetable tr:last-child td { border: 0; }
.filetable td:first-child { padding: 0 0 3px 7px; color: #ddd; }
.filetable .num { font-size: 15px; }
.c1 { width: 40px; } .c2 { width: 28px; } .c3 { width: 247px; } .c4 { width: 123px; } .c5 { width: 102px; }
.vthumb { position: absolute; right: 1px; top: 17px; width: 14px; height: 82px; border-radius: 7px; background: #333; }
.hthumb { position: absolute; left: 0; bottom: 0; width: 219px; height: 14px; border-radius: 7px; background: #333; }
.preview { display: flex; justify-content: center; gap: 9px; padding: 7px 0 0 0; }

.props { flex: 1; padding-top: 7px; }
.props .tabs, .history .tabs { padding-left: 14px; }
.cliprow { display: flex; align-items: center; gap: 10px; padding: 7px 9px 8px 6px; }
.clipname { flex: 1; height: 24px; padding: 0 5px; }
.sec { border-top: 2px solid #2c2c2c; height: 35px; padding-left: 6px; }
.sec.open { height: 201px; }
.sec.last { height: 36px; border-bottom: 2px solid #2c2c2c; }
.sechead { display: flex; align-items: center; width: 100%; height: 32px; color: #c4c4c4; }
.sechead svg { margin-right: 18px; color: #ccc; }
.sechead svg[width="12"] { margin-right: 14px; }
.sechead span { margin-left: auto; padding-right: 16px; color: #8a8a8a; }
.gain { display: flex; align-items: center; gap: 6px; height: 35px; }
.gain .lab { width: 79px; text-align: right; }
.gain.color { height: 21px; gap: 10px; margin-bottom: 4px; }
.swatch { background: #fff; border: 2px solid #000; width: 18px; height: 18px; }
.check { display: flex; align-items: center; gap: 5px; height: 29px; padding-left: 12px; }
.check input { appearance: none; width: 19px; height: 19px; margin: 0; border: 2px solid #888; border-radius: 3px; }

.history { height: 126px; padding: 5px 7px 0 6px; }
.history .tabs { padding-left: 10px; }
.histbox { margin-top: 9px; height: 45px; border: 1px solid #363636; border-radius: 3px; background: #1b1b1b; padding-top: 1px; }
.histrow { background: #474747; height: 25px; display: flex; align-items: center; gap: 13px; padding-left: 2px; }
.histrow svg + svg { margin-right: -3px; }
.undo { display: flex; justify-content: space-between; align-items: center; height: 41px; }

.editor { flex: 1; border: 1px solid #1c5f9e; display: flex; flex-direction: column; }
.editor .tabs { padding: 5px 0 0 14px; height: 46px; }
.overview { display: flex; gap: 8px; align-items: center; padding: 0 15px 0 5px; height: 40px; }
.navigator { flex: 1; height: 40px; display: flex; align-items: center; }
.handle { width: 9px; height: 32px; border: 2px solid #777; border-radius: 3px; background: #2f2f2f; flex: none; position: relative; z-index: 1; }
.handle::after { content: ""; display: block; width: 1px; height: 24px; margin: 2px auto 0; background: #777; }
.navtracks { flex: 1; height: 40px; margin: 0 -4px; padding: 18px 20px 0 4px; border: 3px solid #686868; border-width: 3px 0; background: #2e2e2e; display: flex; flex-direction: column; gap: 1px; }
.np { height: 3px; background: #93399b; margin-right: 8px; }
.ng { height: 3px; background: #7aa852; }
.timehead { display: grid; grid-template-columns: 296px 1fr; margin: 21px 35px 0 8px; height: 36px; }
.edtools { display: flex; justify-content: space-between; align-items: flex-start; }
.toggles { display: flex; border: 1px solid #333; border-radius: 3px; background: #1c1c1c; }
.toggles button { width: 28px; height: 27px; display: grid; place-items: center; border-left: 1px solid #333; }
.toggles button:first-child { border: 0; background: #151515; }
.toggles .fx { font: italic 20px/24px "Noto Sans", sans-serif; }
.snaps { display: flex; gap: 0; align-items: center; padding: 1px 9px 0 0; }
.snaps .ic { width: 28px; }
.ruler { display: flex; overflow: hidden; border: 2px solid #0a0a0a; border-bottom: 1px solid #3a3a3a; border-width: 2px 1px 1px 2px; background: #222; }
.ruler span { flex: 0 0 calc(100% * 60 / 371); text-align: center; font-size: 15px; line-height: 24px; background: linear-gradient(#999, #999) 50% 100% / 2px 10px no-repeat, linear-gradient(#888, #888) 0 100% / 2px 6px no-repeat; }
.ruler .half { flex-basis: calc(100% * 30 / 371); background: none; text-align: left; padding-left: 3px; }
.trackarea { display: flex; margin: 0 12px 0 8px; gap: 1px; flex: 1; }
.tracks { flex: 1; min-width: 0; position: relative; border-bottom: 2px solid var(--line); }
.tracks::after { content: ""; position: absolute; z-index: 5; left: 297px; top: 0; bottom: 0; width: 1px; background: #c00000; }
.playhead { position: absolute; left: 291px; top: -18px; z-index: 6; }
.track { display: grid; grid-template-columns: 298px minmax(0, 1fr); height: 86px; border-bottom: 4px solid var(--line); }
.t1, .t3, .t5 { height: 87px; }
.track.mix { border: 0; height: 81px; }
.thead { border-left: 17px solid var(--c); border-right: 2px solid var(--line); padding: 7px 6px 0 10px; display: grid; grid-template-columns: 19px 1fr auto; column-gap: 7px; align-items: center; align-content: start; grid-auto-rows: 28px 34px; font-size: 15px; }
.thead b { font-weight: 400; }
.t1 { --c: #1c332b; } .t2 { --c: #302245; } .t3 { --c: #453c16; } .t4 { --c: #163030; } .t5 { --c: #dd5aea; } .t6 { --c: #2c3a20; } .t7, .mix { --c: #14263f; }
.t5 .thead { background: #2d2d2d; border-radius: 5px 0 0 5px; }
.msr { display: flex; gap: 4px; }
.msr button { width: 25px; height: 26px; border: 1px solid #373737; border-radius: 3px; background: #1a1a1a; text-align: center; font: 12px/24px "DejaVu Sans Mono", monospace; color: #a0a0a0; }
.msr .dimi { color: #4a4a4a; background: #202020; }
.vol { grid-column: 1 / -1; display: flex; align-items: center; gap: 6px; margin-left: -6px; }
.lane { display: flex; position: relative; background: #1c1c1c; min-width: 0; }
.rest { background: #4b4b4b; flex: 1 1 0; }
.none { flex: 1 1 0; }
.clip { flex: 1 1 0; min-width: 0; overflow: hidden; background: #3a1c3c; box-shadow: inset 2px 0 #b5b0b5; font-size: 12px; line-height: 18px; color: #b9b9b9; display: flex; flex-direction: column; }
.clip.selected { background: #6d1178; box-shadow: inset 0 0 0 2px #fff; color: #fff; font-weight: 500; }
.t6 .clip { background: #2a3620; }
.t6 .clip:first-child { box-shadow: none; }
.t6 .stretched { background: linear-gradient(#2a3620 19px, #141a10 19px 43px, #2a3620 43px); }
.t6 .dark { box-shadow: inset 2px 0 #141a10; }
.cliptop { position: relative; z-index: 2; display: flex; align-items: center; padding: 1px 10px 0 3px; height: 20px; white-space: nowrap; flex: none; }
.cliptop svg { margin-left: auto; }
.cliptop .env { margin-left: auto; }
.cliptop .env + svg { margin-left: 10px; }
.times { position: relative; z-index: 2; display: flex; gap: 26px; padding: 4px 0 0 36px; color: #fff; font: bold 9px/18px "Open Sans", sans-serif; height: 23px; }
.clipfx { position: relative; z-index: 2; display: flex; align-items: center; gap: 6px; margin-top: auto; padding: 0 0 4px 6px; white-space: nowrap; }
.clipfx span { width: 44px; text-align: center; }
.badge { width: 24px; height: 24px; flex: none; border: 1px solid #a0a0a0; border-radius: 50%; background: #10140d; color: #ccc; display: grid; place-items: center; }
.overlay { position: absolute; z-index: 1; inset: 0; width: 100%; height: 100%; }
.vnav { width: 22px; display: flex; flex-direction: column; align-items: center; gap: 4px; border: 3px solid #666; border-width: 2px 3px; border-radius: 5px; background: #2c2c2c; }
.vnav i { flex: 1; width: 16px; }
.vnav .grab { flex: none; width: 14px; height: 8px; margin: -2px 0 -10px; border: 2px solid #777; border-radius: 3px; background: #333; z-index: 1; }
.vnav .grab:last-child { margin: -10px 0 -2px; }
.s1 { background: #41544e; } .s2 { background: #554867; } .s3 { background: #635d3d; } .s5 { background: #e473ee; } .s6 { background: #4f5943; } .s7 { background: #3e4b5f; }
.transport { height: 48px; display: flex; align-items: center; padding: 0 27px 2px 14px; }
.clock { color: var(--blue); font-size: 22px; line-height: 26px; width: 319px; padding-top: 4px; }
.tbtns { display: flex; gap: 7px; }
.zooms { margin-left: auto; }
.rec { color: #f93a3a; }

.bottom { display: grid; grid-template-columns: minmax(0, 1fr) 373px; gap: 5px; height: 130px; }
.levelspanel { padding: 5px 7px 0; }
.levelspanel .tabs { padding-left: 9px; height: 37px; }
.meter { height: 61px; border: 2px solid #000; background: #1c1c1c; display: flex; }
.meter i { flex: 1; border-left: 2px solid #f0e800; border-right: 2px solid #000; margin-right: 10px; }
.scale { display: flex; padding-left: 2px; font-size: 12px; line-height: 16px; }
.scale span { flex: 1 1 0; min-width: 0; padding-top: 8px; background: linear-gradient(#999, #999) 0 0 / 2px 6px no-repeat, linear-gradient(#888, #888) 34% 0 / 2px 3px no-repeat, linear-gradient(#888, #888) 67% 0 / 2px 3px no-repeat; }
.scale .zero { flex: 0 0 16px; background-size: 2px 6px, 0 0, 0 0; }
.scale em { font-style: normal; display: block; width: 42px; margin-left: -20px; text-align: center; }
.scale .first { margin-left: -2px; text-align: left; }
.selview { padding: 5px 0 0 15px; }
.selview .tabs { height: 33px; padding-left: 1px; }
.selview table { border-collapse: collapse; table-layout: fixed; width: 349px; }
.selview th, .selview td { padding: 0; font-weight: 400; text-align: left; width: 96px; height: 27px; }
.selview th:first-child { width: 68px; }
.selview thead th { height: 25px; text-indent: -3px; }
.selview td { color: var(--blue); }
.status { height: 28px; display: flex; align-items: center; background: var(--bg); padding-bottom: 2px; }
.status span { height: 17px; line-height: 17px; border-left: 1px solid #383838; padding-left: 11px; flex: none; white-space: nowrap; }
.status b { font: 11px/17px "DejaVu Sans", sans-serif; }
.status .msg { flex: 1; border: 0; }
.s66 { width: 66px; } .s141 { width: 141px; } .s185 { width: 185px; } .s81 { width: 81px; } .s88 { width: 88px; } .s116 { width: 116px; } .s63 { width: 65px; }
.status .s88 { padding-left: 22px; }
```
FILE: waveforms.js
```js
// Draws each waveform as vertical strokes around its centre line.
let seed = 7;
function rand() {
  seed = (seed * 16807) % 2147483647;
  return seed / 2147483647;
}
document.querySelectorAll("path.w").forEach(function (path) {
  const y = Number(path.dataset.y);
  const from = Number(path.dataset.from);
  const to = Number(path.dataset.to);
  const amp = Number(path.dataset.amp);
  let d = "M" + from + " " + y + "H" + to;
  let level = 0.5;
  seed = 70001 + from * 131;
  for (let x = from; x < to; x++) {
    if (rand() < 0.2) level = 0.25 + rand() * 0.6;
    let a = amp * level * (0.4 + rand() * 0.6);
    if (path.dataset.dense) a = amp * (1 - Math.abs(2 * (x - from) / (to - from) - 1)) + rand() * 2;
    else if (rand() < 0.015) a = amp * 1.2;
    d += "M" + (x + 0.5) + " " + (y - a).toFixed(1) + "V" + (y + a).toFixed(1);
  }
  path.setAttribute("d", d);
});
```
